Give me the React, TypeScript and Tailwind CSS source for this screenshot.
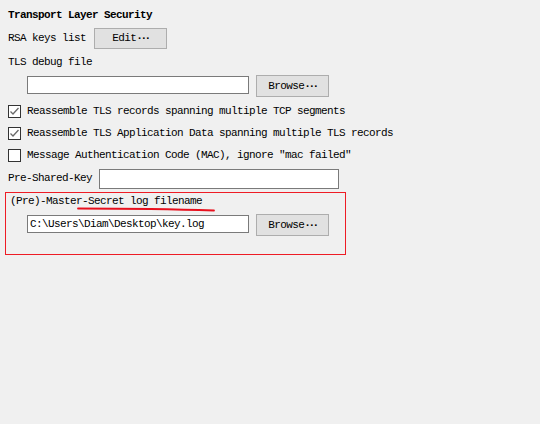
import React from 'react';

const Check = ({ checked }: { checked: boolean }) => (
  <div className="w-[13px] h-[13px] border border-[#333333] bg-white flex items-center justify-center shrink-0">
    {checked && (
      <svg width="11" height="11" viewBox="0 0 11 11">
        <path d="M1.5 5.5 L4 8 L9.5 2" fill="none" stroke="#6a6a6a" strokeWidth="1.3" />
      </svg>
    )}
  </div>
);

const Dots = () => <span className="tracking-[-2.5px] font-bold">···</span>;

const Button = ({ label }: { label: string }) => (
  <div className="w-[73px] h-[22px] bg-[#e1e1e1] border border-[#adadad] flex items-center justify-center">
    <span>{label}</span>
    <Dots />
  </div>
);

export default function App() {
  return (
    <div className="relative w-[540px] h-[424px] bg-[#f0f0f0] text-black text-[11px] tracking-[-0.6px] font-['Liberation_Mono',monospace] pt-[7px] flex flex-col">
      {/* Header */}
      <div className="h-4 flex items-center pl-2 font-bold">Transport Layer Security</div>

      <div className="mt-[5px] h-[21px] flex items-center pl-2 gap-2">
        <span>RSA keys list</span>
        <div className="w-[73px] h-[21px] bg-[#e1e1e1] border border-[#adadad] flex items-center justify-center">
          <span>Edit</span>
          <Dots />
        </div>
      </div>

      <div className="mt-[5px] h-4 flex items-center pl-2">TLS debug file</div>

      <div className="mt-[5px] h-[22px] flex items-start pl-[27px] gap-[7px]">
        <div className="mt-[1px] w-[222px] h-[18px] bg-white border border-[#7a7a7a]" />
        <Button label="Browse" />
      </div>

      {/* Checkboxes */}
      <div className="mt-[3px] flex flex-col">
        {[
          { label: 'Reassemble TLS records spanning multiple TCP segments', checked: true },
          { label: 'Reassemble TLS Application Data spanning multiple TLS records', checked: true },
          { label: 'Message Authentication Code (MAC), ignore "mac failed"', checked: false },
        ].map((c) => (
          <div key={c.label} className="h-[22px] flex items-center pl-2 gap-[6px]">
            <Check checked={c.checked} />
            <span>{c.label}</span>
          </div>
        ))}
      </div>

      <div className="mt-[2px] h-[21px] flex items-center pl-2 gap-[7px]">
        <span>Pre-Shared-Key</span>
        <div className="w-[240px] h-[20px] bg-white border border-[#7a7a7a]" />
      </div>

      {/* Highlighted key log */}
      <div className="mt-[3px] ml-[5px] w-[341px] h-[63px] border border-[#ee1c25] flex flex-col">
        <div className="h-4 flex items-center pl-[4px]">(Pre)-Master-Secret log filename</div>
        <div className="mt-[5px] h-[22px] flex items-start pl-[21px] gap-[7px]">
          <div className="mt-[1px] w-[222px] h-[18px] bg-white border border-[#7a7a7a] flex items-center pl-[2px]">
            C:\Users\Diam\Desktop\key.log
          </div>
          <Button label="Browse" />
        </div>
      </div>

      {/* hand-drawn annotation */}
      <svg className="absolute left-0 top-0 pointer-events-none" width="540" height="424">
        <path d="M78 208.5 C 120 208.5, 170 209, 214 210.5" fill="none" stroke="#e8101e" strokeWidth="1.8" strokeLinecap="round" />
      </svg>
    </div>
  );
}
